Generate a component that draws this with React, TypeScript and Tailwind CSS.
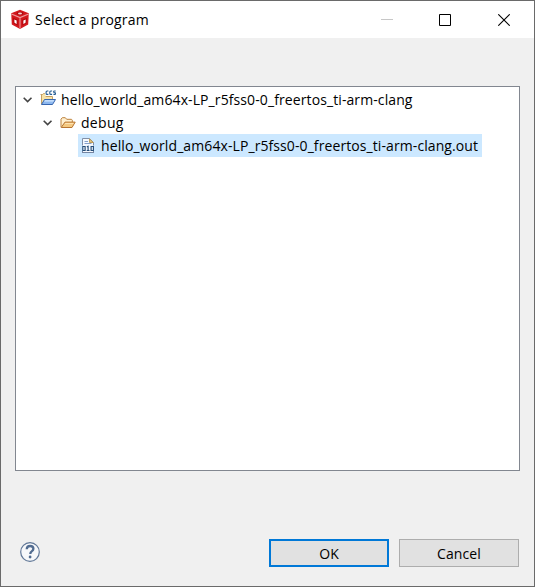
import React from "react";

function CubeIcon() {
  return (
    <svg width="20" height="21" viewBox="0 0 20 21" className="block shrink-0">
      <path d="M10 .8 18.8 4.3 18.2 15.5 10 19.9 1.8 15.5 1.2 4.3Z" fill="#d3181d" />
      <path d="M1.4 5 10 8.6 18.6 5M10 8.6V19.6" stroke="#ee9c9e" strokeWidth="1.1" fill="none" />
      <ellipse cx="10" cy="4.3" rx="3.4" ry="1.6" fill="#a90a10" />
      <ellipse cx="10" cy="4.5" rx="2" ry=".9" fill="#fbd0d0" />
      <path d="m3.1 8.7 4.6 2.1v5.6l-4.1-2.2Z" fill="#b3080e" />
      <path d="m4.3 10.6 2.3 1v3.3l-2.1-1.1Z" fill="#fff" />
      <path d="m16.9 8.7-4.6 2.1v5.6l4.1-2.2Z" fill="#b3080e" />
      <path d="m15.7 10.6-2.3 1v3.3l2.1-1.1Z" fill="#fff" />
    </svg>
  );
}

function Chevron() {
  return (
    <svg width="10" height="8" viewBox="0 0 10 8" className="block shrink-0">
      <path d="m.7 1.8 3.9 3.8 3.9-3.8" fill="none" stroke="#444" strokeWidth="1.6" />
    </svg>
  );
}

function ProjectIcon() {
  return (
    <svg width="16" height="16" viewBox="0 0 16 16" className="block shrink-0">
      <path d="M1.5 14V4.5h1.2l.8-1h1.3l.7 1V7h7v3" fill="#f7e3a8" />
      <path d="M1.5 14V4.5M.5 4.5h2.2l.8-1h1.3M5.5 6.5h7V9" fill="none" stroke="#c5a064" />
      <path d="m1.5 14.5 3-5h11l-3 5Z" fill="#8db8ef" stroke="#3866ae" />
      <path d="M5 10.2h9.2l-.8 1.4H4.2Z" fill="#d5e8ff" />
      <path d="M8.4 1H7.1q-1 0-1 1v1.4q0 1 1 1h1.3M12.1 1h-1.3q-1 0-1 1v1.4q0 1 1 1h1.3M15.7 1h-1.2q-.9 0-.9.8t.9.9h.3q.9 0 .9.8t-.9.9h-1.4" fill="none" stroke="#245c92" strokeWidth="1.1" />
    </svg>
  );
}

function FolderIcon() {
  return (
    <svg width="16" height="14" viewBox="0 0 16 14" className="block shrink-0">
      <path d="M1 11V3.2l1.3-1.5h3l1.4 1.6h4.8l.8.9v2.2" fill="#fff0d0" stroke="#bd823d" />
      <path d="M1.2 11.5 5 6.1h10.2L12 11.5Z" fill="#f4c981" stroke="#b77431" />
      <path d="M5.4 7.1h8.3l-.6 1H4.8Z" fill="#ffe3b0" />
    </svg>
  );
}

function BinaryIcon() {
  return (
    <svg width="14" height="16" viewBox="0 0 14 16" className="block shrink-0">
      <path d="M1.5 14.5V.5h7l4 4v10Z" fill="#f5f9ff" />
      <path d="M1.5 7.5V.5h7l4 4v3" fill="none" stroke="#8190a8" />
      <path d="M8.5.8v3.7h3.7Z" fill="#e7c77e" stroke="#b58e40" strokeWidth=".8" />
      <path d="M3.5 3.5H7M3.5 5.5h7" stroke="#84a0cb" />
      <path d="M1.5 14.5h11M1.5 13v2M12.5 13v2" stroke="#7585a1" />
      <path d="M1.8 8.5h2.3v4H1.8ZM5.8 8.8l1.3-.5v4.2M5.7 12.5h2.8M10.1 8.5h2.3v4h-2.3Z" fill="none" stroke="#254d78" strokeWidth="1.15" />
    </svg>
  );
}

export default function App() {
  return (
    <div className="flex h-[587px] w-[535px] flex-col border border-[#6a6a6a] bg-[#f0f0f0] font-['Open_Sans','Noto_Sans',sans-serif] text-[14px] text-[#000]">
      <header className="flex h-[37px] shrink-0 items-center bg-white pl-[9px]">
        <CubeIcon />
        <h1 className="ml-[5px] whitespace-nowrap tracking-[0.22px]">Select a program</h1>
        <div className="ml-auto flex items-center pr-6">
          <svg width="12" height="12" viewBox="0 0 12 12"><path d="M0 5.5h12" stroke="#c7c7c7" /></svg>
          <svg width="12" height="12" viewBox="0 0 12 12" className="ml-[46px]"><path d="M.5.5h11v11H.5Z" fill="none" stroke="#000" /></svg>
          <svg width="12" height="12" viewBox="0 0 12 12" className="ml-[47px]"><path d="m.3.3 11.4 11.4M11.7.3.3 11.7" stroke="#000" strokeWidth="1.1" /></svg>
        </div>
      </header>
      <main className="mx-[14px] mt-12 h-[385px] shrink-0 border border-[#828790] bg-white pt-[1px]">
        <div className="flex h-[23px] items-center pl-[7px]">
          <Chevron />
          <span className="ml-[7px] mb-[3px]"><ProjectIcon /></span>
          <span className="ml-[5px] whitespace-nowrap tracking-[0.1px]">hello_world_am64x-LP_r5fss0-0_freertos_ti-arm-clang</span>
        </div>
        <div className="flex h-[23px] items-center pl-[27px]">
          <Chevron />
          <span className="ml-[7px]"><FolderIcon /></span>
          <span className="ml-[5px] tracking-[0.3px]">debug</span>
        </div>
        <div className="ml-[62px] flex h-[23px] w-[404px] items-center bg-[#cce8ff] pl-[3px]">
          <span className="mt-[1px]"><BinaryIcon /></span>
          <span className="ml-[6px] whitespace-nowrap tracking-[0.09px]">hello_world_am64x-LP_r5fss0-0_freertos_ti-arm-clang.out</span>
        </div>
      </main>
      <footer className="mt-[68px] flex h-7 items-center pl-[18px] pr-[15px]">
        <svg width="22" height="22" viewBox="0 0 22 22" className="mt-[-2px]">
          <circle cx="11" cy="11" r="9.3" fill="#f7f8fa" stroke="#607797" strokeWidth="1.2" />
          <path d="M7.7 8.2Q7.9 5 11.1 5q3.3 0 3.3 2.8 0 1.5-1.7 2.6-1.4.9-1.4 2.5" fill="none" stroke="#526c90" strokeWidth="2.3" />
          <circle cx="11.1" cy="16" r="1.4" fill="#526c90" />
        </svg>
        <button className="ml-auto h-7 w-[120px] border-2 border-[#0078d7] bg-[#e1e1e1]">OK</button>
        <button className="ml-[10px] h-7 w-[120px] border border-[#adadad] bg-[#e1e1e1] tracking-[0.1px]">Cancel</button>
      </footer>
    </div>
  );
}
